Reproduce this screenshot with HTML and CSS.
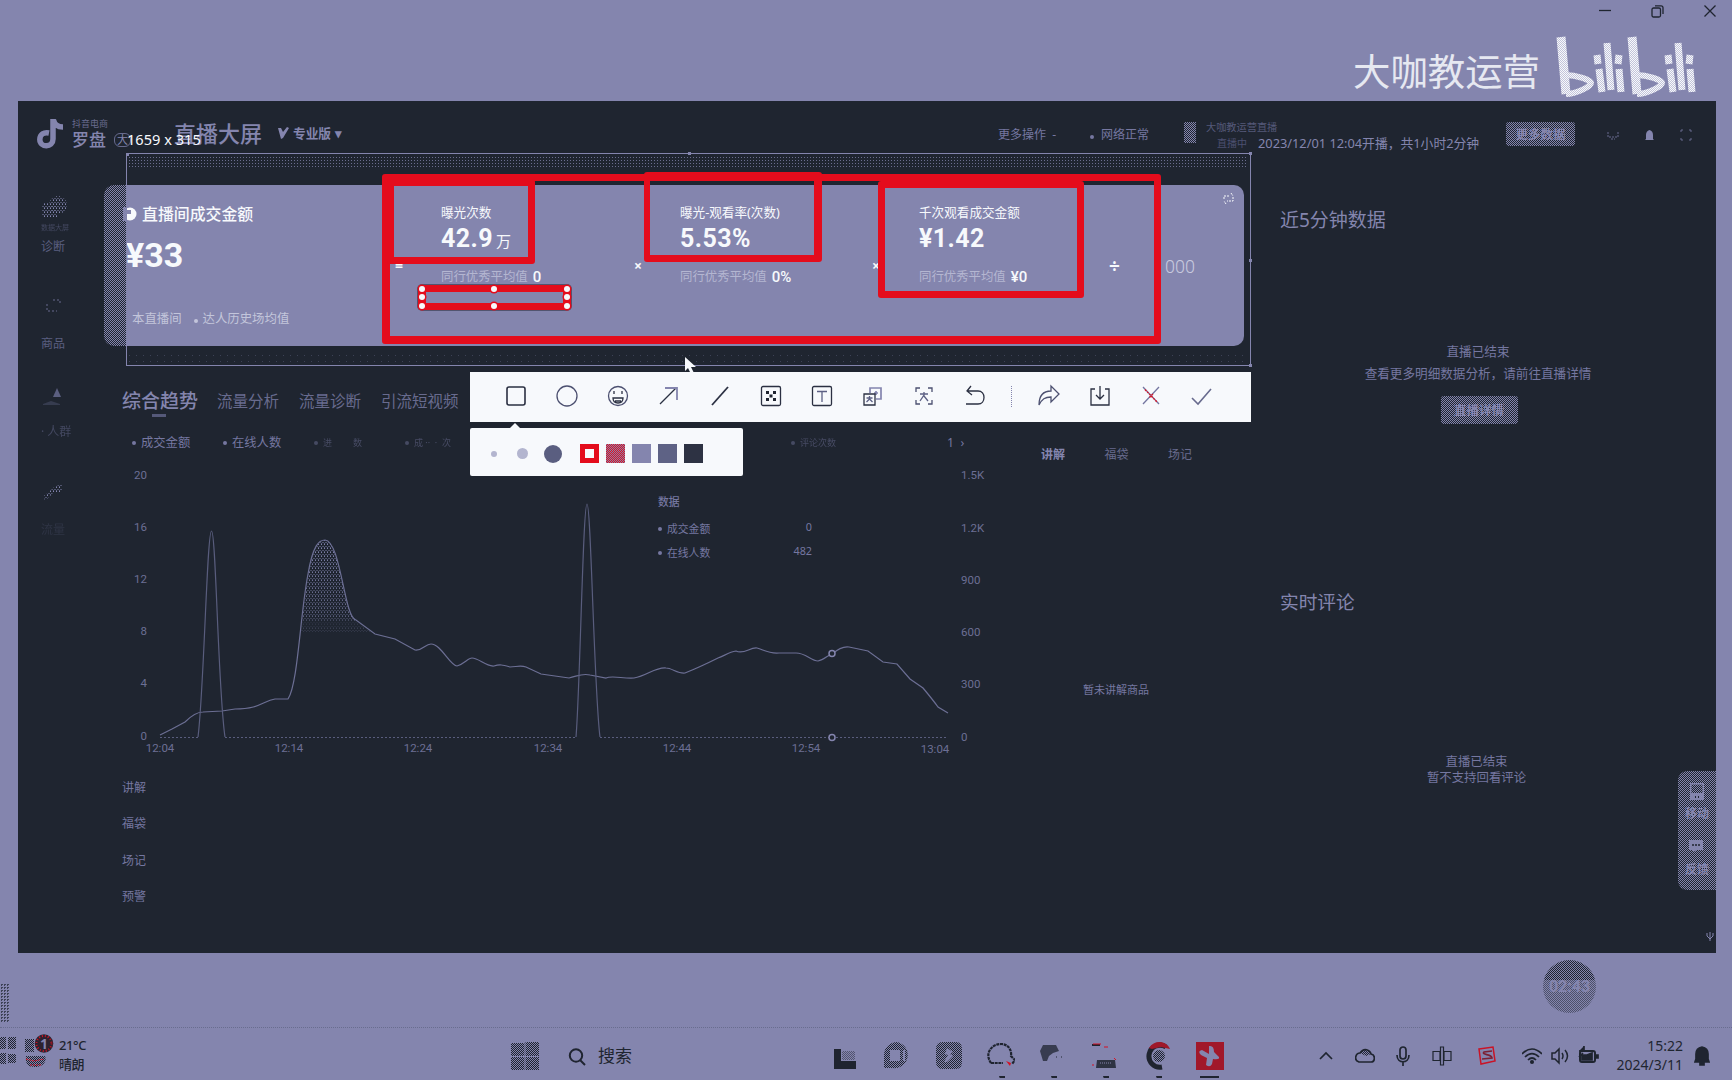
FILE: index.html
```html
<!DOCTYPE html>
<html lang="zh-CN">
<head>
<meta charset="utf-8">
<title>直播大屏</title>
<link rel="stylesheet" href="styles.css">
</head>
<body>
<div class="desktop">
  <header class="titlebar">
    <div class="window-controls">
      <svg width="12" height="12" viewBox="0 0 12 12"><path d="M0 5.5h12"/></svg>
      <svg width="13" height="13" viewBox="0 0 13 13"><rect x="1" y="3" width="8.500" height="9" rx="1.500"/><path d="M4 .8h6q2 0 2 2V9"/></svg>
      <svg width="12" height="12" viewBox="0 0 12 12"><path d="M.5.5l11 11M11.500.5l-11 11"/></svg>
    </div>
    <div class="watermark">
      <span>大咖教运营</span>
      <svg width="140" height="62" viewBox="0 0 140 62" fill="none" stroke="url(#grain)" stroke-width="7">
        <defs><pattern id="grain" width="2" height="2" patternUnits="userSpaceOnUse"><path d="M0 0h2v2H0z" fill="#c3c4da"/><path d="M0 0h1v1H0zM1 1h1v1H1z" fill="#f7f9fc"/></pattern></defs>
        <g id="bili"><path d="M5 2l5 57" stroke-width="9"/><path d="M9 40c12 0 26 5 26 8s-14 11-25 11" stroke-width="6"/><path d="M41 20l1 9M43 34l3 23M51 8l4 47M63 20l-1 9M63 34l2 23"/></g>
        <use href="#bili" x="71"/>
      </svg>
    </div>
  </header>

  <main class="dash">
    <div class="dash-header">
      <svg class="note" width="27" height="30" viewBox="0 0 27 30" fill="none" stroke="#8485ae" stroke-width="5.500"><path d="M16 0v20c0 9-13 9-13.200.5C3 15 7 13 12 14M16.500 1c1 5 4 7 9.500 7"/></svg>
      <div class="brand"><small>抖音电商</small><b>罗盘</b></div>
      <div class="ring">大</div>
      <h1>直播大屏</h1>
      <div class="edition"><svg width="11" height="12" viewBox="0 0 11 12"><path d="M0 1h3l2 4 4-5 2 1-6 10-2 1z"/></svg>专业版<i>▾</i></div>
      <span class="more-op">更多操作&nbsp;&nbsp;-</span>
      <span class="net"><i class="dot"></i>网络正常</span>
      <span class="avatar dither"></span>
      <div class="stream"><small>大咖教运营直播</small><p><em>直播中</em><span>2023/12/01 12:04开播，共1小时2分钟</span></p></div>
      <span class="btn dither more-data">更多数据</span>
      <div class="head-icons">
        <svg width="12" height="12" viewBox="0 0 12 12"><path d="M1 3v5h10V3M4 10h4" fill="none" stroke="#686b8e" stroke-dasharray="2 1"/></svg>
        <svg width="9" height="11" viewBox="0 0 9 11"><path d="M1 9V5Q1 1 4.500 0 8 1 8 5v4l1 1H0z" fill="#8485ae"/></svg>
        <svg width="12" height="12" viewBox="0 0 12 12"><path d="M1 3V1h2M9 1h2v2M1 9v2h2M9 11h2V9" fill="none" stroke="#686b8e"/></svg>
      </div>
    </div>

    <div class="dash-body">
      <nav class="side">
        <svg width="27" height="22" viewBox="0 0 27 22"><ellipse cx="17" cy="9" rx="9" ry="9" fill="url(#speckle)"/><path d="M1 7h15v14H1z" fill="url(#speckle)"/></svg>
        <span class="faint">数据大屏</span>
        <span>诊断</span>
        <svg class="s2" width="24" height="16" viewBox="0 0 24 16" fill="none" stroke="#686b8e" stroke-dasharray="2 2"><path d="M12 3l7 0v4M6 7v7h10"/></svg>
        <span class="s3">商品</span>
        <svg class="s4" width="24" height="20" viewBox="0 0 24 20"><path d="M16 0l4 9h-8z"/><path d="M2 16l8-3 9 3v1H2z" opacity=".4"/></svg>
        <span class="s5 faint">· 人群</span>
        <svg class="s6" width="24" height="20" viewBox="0 0 24 20"><path d="M21 0v9h-8L4 18 3 13l9-8z" fill="url(#speckle)"/></svg>
        <span class="s7 faint">流量</span>
      </nav>

      <section class="main">
        <div class="card">
          <div class="revenue">
            <h2><svg width="14" height="14" viewBox="0 0 14 14"><circle cx="7" cy="7" r="6.500" fill="#f7f9fc"/><path d="M0 0h4v14H0zM4 3h4v4H4z" fill="#8485ae"/></svg>直播间成交金额</h2>
            <strong>¥33</strong>
            <p><span>本直播间</span><span><i class="dot"></i>达人历史场均值</span></p>
          </div>
          <span class="op eq">=</span>
          <div class="metric"><label>曝光次数</label><strong>42.9<em>万</em></strong><p><span>同行优秀平均值</span><b>0</b></p></div>
          <span class="op">×</span>
          <div class="metric"><label>曝光-观看率(次数)</label><strong>5.53%</strong><p><span>同行优秀平均值</span><b>0%</b></p></div>
          <span class="op">×</span>
          <div class="metric"><label>千次观看成交金额</label><strong>¥1.42</strong><p><span>同行优秀平均值</span><b>¥0</b></p></div>
          <span class="op div">÷</span>
          <span class="thousand">000</span>
          <svg class="swap" width="11" height="11" viewBox="0 0 11 11"><path d="M1 6V3h6M10 4v4H4M8 0l2 3M3 11L1 8" stroke-dasharray="2 1"/></svg>
        </div>

        <div class="lower">
          <div class="trend">
            <div class="tabs"><b>综合趋势</b><span>流量分析</span><span>流量诊断</span><span>引流短视频</span></div>
            <div class="legend"><span><i class="dot"></i>成交金额</span><span><i class="dot"></i>在线人数</span><span class="dim"><i class="dot"></i>进 &nbsp; &nbsp; &nbsp; &nbsp; 数</span><span class="dim"><i class="dot"></i>成 ·· &nbsp;· &nbsp;次</span><span class="dim last"><i class="dot"></i>评论次数</span><span class="page">1 &nbsp;›</span></div>
            <div class="chart">
              <svg width="918" height="309" viewBox="104 456 918 309">
                <defs>
                  <pattern id="speckle" width="3" height="4" patternUnits="userSpaceOnUse"><path d="M0 0h1v1H0zM1.500 2h1v1h-1z" fill="#8485ae"/><path d="M0 3h1v1H0z" fill="#5b5f80"/></pattern>
                  <linearGradient id="fade" x1="0" y1="0" x2="0" y2="1"><stop offset="0" stop-color="#fff"/><stop offset=".85" stop-color="#999"/><stop offset=".9" stop-color="#222"/><stop offset="1" stop-color="#555"/></linearGradient>
                  <mask id="peak-mask"><path fill="url(#fade)" d="M301 632C305 600 309 540 325 540C340 540 345 618 356 620Q365 630 372 632Z"/></mask>
                </defs>
                <path fill="url(#speckle)" mask="url(#peak-mask)" d="M300 538H374V633H300Z"/>
                <path class="line" d="M160 735L172 729L185 722Q195 712 203 712L222 711L235 709C260 709 263 701 275 699L288 699C298 684 300 615 308 574C313 545 319 540 325 540C341 541 344 618 356 620L375 634L395 639L415 650C423 651 425 644 431 644C441 644 450 666 457 666C464 664 468 658 472 658C479 658 486 667 494 666C500 664 503 665 510 667C516 667 520 665 526 667L541 674L569 678C578 676 582 673 590 675L606 678C612 675 624 679 634 678C647 676 655 667 666 668C672 668 678 674 685 673C695 669 704 665 718 658C724 656 729 652 736 651C744 655 750 647 757 648C764 650 769 654 779 653L796 653C806 653 811 661 818 661C824 660 828 655 832 654C838 649 843 646 849 647L868 651L883 662L897 664L910 679L923 688Q933 700 938 707L948 713"/>
                <path class="line soft" d="M198 737C204 690 207 531 211.500 531C216 531 218 690 225 737M576 737C580 690 583 504 587 504C591 504 594 690 600 737"/>
                <path class="line soft" stroke-dasharray="2 2" d="M160 737.500H198M225 737.500H576M600 737.500H948"/>
                <g class="marker"><circle cx="832" cy="653.500" r="3"/><circle cx="832" cy="737.500" r="3"/></g>
                <g class="axis" text-anchor="end"><text x="147" y="479">20</text><text x="147" y="531">16</text><text x="147" y="583">12</text><text x="147" y="635">8</text><text x="147" y="687">4</text><text x="147" y="740">0</text></g>
                <g class="axis"><text x="961" y="479">1.5K</text><text x="961" y="532">1.2K</text><text x="961" y="584">900</text><text x="961" y="636">600</text><text x="961" y="688">300</text><text x="961" y="741">0</text></g>
                <g class="axis" text-anchor="middle"><text x="160" y="752">12:04</text><text x="289" y="752">12:14</text><text x="418" y="752">12:24</text><text x="548" y="752">12:34</text><text x="677" y="752">12:44</text><text x="806" y="752">12:54</text><text x="935" y="753">13:04</text></g>
              </svg>
              <div class="chart-tip"><b>数据</b><p><i class="dot"></i>成交金额<span>0</span></p><p><i class="dot"></i>在线人数<span>482</span></p></div>
            </div>
            <div class="events"><span>讲解</span><span>福袋</span><span>场记</span><span>预警</span></div>
          </div>
          <div class="talk">
            <div class="talk-tabs"><b>讲解</b><span>福袋</span><span>场记</span></div>
            <p>暂未讲解商品</p>
          </div>
        </div>
      </section>

      <aside class="right">
        <h3>近5分钟数据</h3>
        <div class="ended"><p>直播已结束</p><p>查看更多明细数据分析，请前往直播详情</p><span class="btn dither">直播详情</span></div>
        <h3 class="comments">实时评论</h3>
        <div class="no-comments"><p>直播已结束</p><p>暂不支持回看评论</p></div>
      </aside>
    </div>

    <div class="float-menu dither">
      <svg width="14" height="17" viewBox="0 0 14 17"><path d="M.7.7h12.600v15.600H.7z" fill="none" stroke="#8485ae" stroke-width="1.400"/><path d="M0 10h14v7H0z"/><path d="M5.500 13v2M8.500 13v2" stroke="#1f2430"/></svg>
      <span>移动</span>
      <svg width="16" height="14" viewBox="0 0 16 14"><path d="M0 0h14v10H8l-4 2v-2H0z"/><path d="M3 5h8" stroke="#1f2430" stroke-width="1.500" stroke-dasharray="2 1"/></svg>
      <span>反馈</span>
    </div>
    <svg class="corner" width="8" height="9" viewBox="0 0 8 9"><path d="M1 1v3l3 3 3-3V1M4 0v9" fill="none" stroke="#8485ae"/></svg>
  </main>

  <div class="shelf">
    <span class="fragment dither-dark"></span>
    <span class="ball">02:43</span>
  </div>

  <footer class="taskbar">
    <div class="weather">
      <svg width="56" height="38" viewBox="0 0 56 38"><path d="M0 3h6v12H0zM8 3h8v12H8zM0 19h6v11H0zM8 20h8v9H8z" fill="url(#dots)"/><path d="M25 5h9v13h-9zM26 22h18c3 0 3 11-9 11-7 0-10-3-9-11z" fill="url(#dots)"/><path d="M26 25l8 2 10-2M30 31h11" stroke="#d51124" fill="none" stroke-dasharray="2 1"/><circle cx="44" cy="9.500" r="9.300" fill="#2c222f"/><circle cx="44" cy="9.500" r="7.500" fill="none" stroke="#d51124" stroke-width="2" stroke-dasharray="1 2"/><text x="44" y="15" text-anchor="middle" font-size="14" font-weight="700" fill="#8485ae">1</text></svg>
      <p>21°C<br>晴朗</p>
    </div>
    <svg class="start" width="28" height="28" viewBox="0 0 28 28"><defs><pattern id="dots" width="2" height="2" patternUnits="userSpaceOnUse"><path d="M0 0h1v1H0zM1 1h1v1H1z" fill="#1f2430"/></pattern></defs><path d="M0 1h13.500v13H0zM14.500 0H28v14H14.500zM0 15h13.500v13H0zM14.500 15H28v13H14.500z" fill="url(#dots)"/></svg>
    <div class="search"><svg width="18" height="18" viewBox="0 0 18 18" fill="none" stroke="#1f2430" stroke-width="2"><circle cx="8" cy="7.500" r="6.200"/><path d="M12 12l5 5"/></svg>搜索</div>
    <div class="apps">
      <svg width="28" height="37" viewBox="0 0 28 37"><path d="M3 8h7v12h15v8H3z" fill="#1f2430"/><path d="M11 10h13v9H11z" fill="url(#dots)" opacity=".5"/></svg>
      <svg width="28" height="37" viewBox="0 0 28 37"><path d="M14 1a13 13 0 1 1-5 26H1V14A13 13 0 0 1 14 1zM7 9v11h10V9zM20 9v11h2V9z" fill="url(#dots)" fill-rule="evenodd"/></svg>
      <svg width="28" height="37" viewBox="0 0 28 37"><path fill-rule="evenodd" d="M7 1h14q6 0 6 7v13q0 7-6 7H7q-6 0-6-7V8q0-7 6-7zm5 6l-2 6 3 1-4 7h3l6-6-3-2 3-2z" fill="url(#dots)"/></svg>
      <svg width="28" height="37" viewBox="0 0 28 37" fill="none"><path d="M4 22C-3 12 5 3 14 3c7 0 11 6 10 12l4 4-3 4M4 22h12" stroke="#1f2430" stroke-width="2.200" stroke-dasharray="3 .7"/><path d="M19 20l4 5 1-3z" fill="#d51124"/><path d="M12 35h6v3h-5z" fill="#1f2430"/></svg>
      <svg width="28" height="37" viewBox="0 0 28 37"><path d="M1 10l3-6h13l3 6-6 2-4 3-2 5H4z" fill="#1f2430" opacity=".75"/><path d="M17 16h7" stroke="#1f2430" stroke-dasharray="1 4"/><path d="M12 35h6v3h-5z" fill="#1f2430"/></svg>
      <svg width="28" height="37" viewBox="0 0 28 37"><path d="M1 4h8" stroke="#1f2430" stroke-width="2"/><path d="M2 3h8M13 6h4M1 24h2M23 17l2 2" stroke="#d51124"/><path d="M6 19h18l1 8H5z" fill="#1f2430" opacity=".85"/><path d="M9 22h12" stroke="#8485ae" stroke-dasharray="1 1"/><path d="M12 35h6v3h-5z" fill="#1f2430"/></svg>
      <svg width="28" height="37" viewBox="0 0 28 37" fill="none"><path d="M22 6A11 11 0 1 0 18 26" stroke="#1f2430" stroke-width="5"/><path d="M5 7C10-1 22-1 26 8l-9-2-9 2z" fill="#9f182a"/><circle cx="15" cy="15" r="6" fill="url(#dots)"/><path d="M12 35h6v3h-5z" fill="#1f2430"/></svg>
      <svg width="28" height="37" viewBox="0 0 28 37"><path d="M0 1h28v28H0z" fill="#a1182a"/><path d="M13 5q5-1 5 6l5 5q1 3-6 2l-1 5q-2 4-6 1l1-7-6-3q-4-4 1-5l7 4z" fill="#8485ae"/><path d="M4 35h19v2H4z" fill="#1f2430"/></svg>
    </div>
    <div class="tray">
      <svg class="t1" width="14" height="20" viewBox="0 0 14 20"><path d="M1 13l6-6 6 6"/></svg>
      <svg class="t2" width="20" height="20" viewBox="0 0 20 20"><path d="M4 16C-2 14 1 7 5 7c4-6 10-3 11 1 5 1 4 8 0 8z"/><path d="M5 7c4-5 9-4 11 1l-5 2z" fill="url(#dots)" stroke="none"/></svg>
      <svg class="t3" width="14" height="20" viewBox="0 0 14 20"><rect x="4" y="1" width="6" height="12" rx="3"/><path d="M1 9c0 9 12 9 12 0M7 15v5"/></svg>
      <svg class="t4" width="20" height="20" viewBox="0 0 20 20" stroke-width="1.200"><path d="M1 5.500h7v9H1zM12 5.500h7v9h-7zM8.500 1h3v18h-3z"/></svg>
      <svg class="t5" width="20" height="20" viewBox="0 0 20 20"><path d="M2 3l14-2 2 14-14 3z" stroke="#ca1326" stroke-width="1.500"/><path d="M15 5l-8 1c-3 3 8 2 8 6l-10 1" stroke="#7b2034"/></svg>
      <svg class="t6" width="20" height="20" viewBox="0 0 20 20"><path d="M0 8q10-10 20 0M3 11q7-7 14 0M6 14q4-4 8 0"/><circle cx="10" cy="16" r="1.200" fill="#1f2430"/></svg>
      <svg class="t7" width="18" height="20" viewBox="0 0 18 20"><path d="M1 7h3l4-4v14l-4-4H1zM11 7q2 3 0 6M14 4q5 6 0 12" stroke-width="1.500"/></svg>
      <svg class="t8" width="21" height="20" viewBox="0 0 21 20"><rect x="2" y="5" width="15" height="11" rx="2" stroke-width="2"/><path d="M1 5h5V0M5 7l-4 4M18 9h2v3h-2zM4 14V9h5l5-2v7z" fill="#1f2430"/></svg>
      <p>15:22<br>2024/3/11</p>
      <svg class="t9" width="16" height="20" viewBox="0 0 16 20"><path d="M2 13V8Q2 2 8 1q6 1 6 7v5l1 3H1zM6 17h4v2H6z" fill="#1f2430"/></svg>
    </div>
  </footer>

  <div class="capture">
    <span class="capture-size">1659 x 315</span>
    <div class="selection"><i></i><i></i><i></i><i></i><i></i></div>
    <div class="box whole"></div><div class="box b1"></div><div class="box b2"></div><div class="box b3"></div>
    <div class="box active"><i></i><i></i><i></i><i></i><i></i><i></i><i></i><i></i></div>

    <div class="tools">
      <svg viewBox="0 0 24 24"><rect x="3" y="3" width="18" height="18" rx="2" stroke-width="1.600"/></svg>
      <svg viewBox="0 0 24 24"><circle cx="12" cy="12" r="10" stroke="#4c5070"/></svg>
      <svg viewBox="0 0 24 24"><circle cx="12" cy="12" r="9.500" stroke="#4c5070"/><path d="M8 7v3M16 7v3M7 14h10q0 5-5 5t-5-5zM9 17h6"/></svg>
      <svg viewBox="0 0 24 24"><path d="M3 20L19 4"/><path d="M8 4h12v12" stroke="#8485ae" stroke-width="1.800"/></svg>
      <svg viewBox="0 0 24 24"><path d="M4 21L20 3" stroke-width="1.800"/></svg>
      <svg viewBox="0 0 24 24"><rect x="2.500" y="2.500" width="19" height="19" rx="1.500"/><path d="M7 7h3v3H7zM14 7h3v3h-3zM10.500 10.500h3v3h-3zM7 14h3v3H7zM14 14h3v3h-3z" fill="#1f2430" stroke="none"/></svg>
      <svg viewBox="0 0 24 24"><rect x="2.500" y="2.500" width="19" height="19" rx="1.500"/><path d="M7 7.500h10M12 7.500V18" stroke="#5c6084"/></svg>
      <svg viewBox="0 0 24 24"><path d="M9 9V4h11v11h-5M15 7v4M13 9h4" stroke="#8485ae" stroke-width="1.700"/><path d="M3 10h11v11H3z"/><path d="M5.500 14h6M8.500 12v3l-3 3M8.500 15l3 3" stroke="#5c6084"/></svg>
      <svg viewBox="0 0 24 24"><path d="M4 8V4h4M16 4h4v4M4 16v4h4M16 20h4v-4" stroke="#4c5070"/><path d="M8 10h8M12 8v3l-4 6M12 12l4 5" stroke="#5c6084"/></svg>
      <svg viewBox="0 0 24 24"><path d="M3 20h12c8 0 8-13 0-13H4M8 2L4 7l5 4"/></svg>
      <b class="sep"></b>
      <svg viewBox="0 0 24 24"><path d="M2 21C2 11 7 7 14 7V2l8 8-8 8v-5C8 13 5 15 2 21z" stroke="#4c5070"/></svg>
      <svg viewBox="0 0 24 24"><path d="M7 5H3v16h18V5h-4M12 2v13M8 11l4 4 4-4"/></svg>
      <svg viewBox="0 0 24 24"><path d="M4 3l16 17M20 3L4 20" stroke="#7476a0"/><path d="M6 5.500l12 12.500M14 10l-4 4" stroke="#dc1729" stroke-dasharray="2 1"/></svg>
      <svg viewBox="0 0 24 24"><path d="M2 14l6 6L21 5" stroke="#686b8e" stroke-width="1.600"/></svg>
    </div>
    <div class="palette">
      <i class="size s"></i><i class="size m"></i><i class="size l"></i>
      <i class="swatch red"></i><i class="swatch pink"></i><i class="swatch blue"></i><i class="swatch gray"></i><i class="swatch black"></i>
    </div>
    <svg class="cursor" width="12" height="18" viewBox="0 0 12 18"><path d="M0 0v14l3-3 3 6 3-1-3-6h5z" fill="#f7f9fc"/></svg>
  </div>
</div>
</body>
</html>
```

FILE: styles.css
```css
:root {
  --mist: #8485ae;
  --ink: #1f2530;
  --dim: #686b8e;
  --white: #f7f9fc;
  --red: #e40c1c;
}
* { box-sizing: border-box; }
body { margin: 0; background: var(--mist); font-family: "Noto Sans", "Noto Sans CJK SC", sans-serif; color: var(--mist); }
h1, h2, h3, p { margin: 0; font-weight: 400; }
i, em { font-style: normal; }
svg { display: block; flex: none; }
.desktop { position: relative; width: 1732px; height: 1080px; overflow: hidden; display: flex; flex-direction: column; white-space: nowrap; }
.dither { background: repeating-conic-gradient(var(--mist) 0 25%, var(--ink) 0 50%) 0 0 / 2px 2px; }
.dither-dark { background: repeating-conic-gradient(var(--ink) 0 25%, var(--mist) 0 100%) 0 0 / 3px 3px; }
.dot { display: inline-block; width: 4px; height: 4px; border-radius: 50%; background: currentColor; margin-right: 5px; flex: none; }

/* window title strip */
.titlebar { height: 101px; display: flex; flex-direction: column; align-items: flex-end; }
.window-controls { display: flex; gap: 40px; padding: 5px 16px 0 0; height: 35px; }
.window-controls svg { fill: none; stroke: var(--ink); stroke-width: 1.3; }
.watermark { display: flex; align-items: center; gap: 16px; height: 62px; padding-right: 36px; color: #e6e8f1; font-size: 37.4px; }
.watermark span { line-height: 62px; padding-top: 12px; }

/* dashboard */
.dash { position: relative; height: 852px; margin: 0 16px 0 18px; background: var(--ink); }
.dash-header { height: 52px; display: grid; grid-template-columns: 35px 42px 60px 104px 720px 92px 94px 22px 300px 101px 96px; padding-left: 19px; align-items: start; }
.dash-header > * { margin-top: 18px; }
.brand { display: flex; flex-direction: column; }
.brand small { font-size: 9px; line-height: 10px; color: var(--dim); }
.brand b { font-size: 17px; line-height: 22px; font-weight: 500; }
.ring { width: 17px; height: 14px; border: 1px solid var(--dim); border-radius: 6px; font-size: 11px; line-height: 12px; text-align: center; }
.dash-header .ring { margin-top: 32px; }
h1 { font-size: 22px; line-height: 29px; font-weight: 500; }
.dash-header .edition { margin-top: 22px; }
.edition { display: flex; align-items: center; gap: 4px; font-size: 12.7px; line-height: 20px; font-weight: 700; }
.edition svg { fill: var(--mist); }
.more-op, .net { font-size: 12px; line-height: 32px; color: #7577a0; }
.net .dot { margin-right: 7px; }
.avatar { width: 12px; height: 21px; }
.dash-header .avatar { margin-top: 21px; }
.stream { font-size: 12px; line-height: 18px; }
.stream small { display: block; font-size: 10.2px; line-height: 16px; color: #555979; }
.stream p { padding-left: 11px; font-size: 12.8px; line-height: 17px; display: flex; }
.stream p em { width: 41px; font-size: 10px; color: #4c5070; }
.btn { display: block; width: 69px; height: 24px; border-radius: 3px; text-align: center; font-size: 12.5px; font-weight: 700; line-height: 25px; color: #8485ae; }
.dash-header .btn { margin-top: 21px; }
.head-icons { display: flex; gap: 26px; align-items: center; height: 32px; }

.dash-body { display: grid; grid-template-columns: 86px 1146px 1fr; }
.side { display: flex; flex-direction: column; align-items: flex-start; padding: 43px 0 0 23px; font-size: 12px; line-height: 18px; color: #5b5f80; }
.side svg { fill: #5b5f80; }
.side .faint { opacity: .6; }
.side > span:nth-of-type(1) { font-size: 7px; line-height: 20px; }
.side .s2 { margin-top: 41px; fill: none; }
.side .s3 { margin-top: 22px; }
.side .s4 { margin-top: 35px; }
.side .s5 { margin-top: 15px; }
.side .s6 { margin-top: 42px; }
.side .s7 { margin-top: 18px; opacity: .25; }

.card { position: relative; margin: 32px 6px 26px 0; height: 161px; border-radius: 10px; background: linear-gradient(to right, transparent 23px, var(--mist) 23px), repeating-conic-gradient(var(--mist) 0 25%, var(--ink) 0 50%) 0 0 / 2px 2px; color: var(--white); display: grid; grid-template-columns: 291px 46px 193px 46px 192px 47px 190px 56px 80px; align-items: start; }
.revenue { padding: 17px 0 0 19px; }
.revenue h2 { display: flex; align-items: center; gap: 5px; font-size: 15.9px; line-height: 24px; font-weight: 500; }
.revenue strong { display: block; padding-left: 3px; margin-top: 8px; font: 700 34px/42px Roboto, sans-serif; }
.revenue p { display: flex; gap: 12px; margin-top: 34px; padding-left: 9px; font-size: 12.4px; line-height: 18px; color: #c3c5db; }
.metric label { display: block; margin-top: 19px; font-size: 12.6px; line-height: 18px; }
.metric strong { display: block; font: 700 25px/34px Roboto, sans-serif; letter-spacing: .4px; }
.metric em { font: 400 15px "Noto Sans CJK SC"; margin-left: 3px; }
.metric p { display: flex; gap: 5px; margin-top: 12px; font-size: 12.4px; line-height: 18px; color: #b4b6d1; }
.metric p b { font: 500 15px/18px Roboto, sans-serif; color: var(--white); }
.op { margin-top: 70px; font-size: 14px; line-height: 22px; font-weight: 700; }
.op.div { font-size: 19px; }
.thousand { margin-top: 70px; font: 300 18px/24px Roboto, sans-serif; color: #c8cadf; }
.swap { position: absolute; right: 10px; top: 8px; fill: none; stroke: var(--white); stroke-width: 1; }

.lower { display: grid; grid-template-columns: 918px 228px; }
.tabs { display: flex; height: 58px; padding-left: 18px; line-height: 58px; font-size: 15.5px; color: var(--dim); }
.tabs b { position: relative; width: 95px; font-size: 19px; font-weight: 500; color: var(--mist); }
.tabs b::after { content: ""; position: absolute; left: 30px; top: 42px; width: 14px; height: 3px; background: #555979; }
.tabs span { width: 82px; }
.legend { display: flex; height: 26px; padding-left: 28px; line-height: 26px; font-size: 12.3px; }
.legend span { width: 91px; display: flex; align-items: center; white-space: pre; color: #7577a0; }
.legend .dim { opacity: .45; font-size: 9px; }
.legend .last { margin-left: 295px; width: 156px; }
.legend .page { width: 40px; }
.chart { position: relative; height: 309px; }
.line { fill: none; stroke: #6c6f94; stroke-width: 1.2; }
.soft { stroke: #595d7d; }
.marker { fill: var(--ink); stroke: var(--mist); stroke-width: 1.5; }
.axis { fill: #6c6f94; font-family: Roboto, sans-serif; font-size: 11.5px; }
.chart-tip { position: absolute; left: 554px; top: 36px; width: 154px; font-size: 10.8px; color: #7577a0; }
.chart-tip b { display: block; font-weight: 500; line-height: 19px; }
.chart-tip p { display: flex; align-items: center; line-height: 24px; }
.chart-tip p:first-of-type { margin-top: 6px; }
.chart-tip p span { margin-left: auto; padding-bottom: 5px; line-height: 19px; }
.events { display: flex; flex-direction: column; padding: 5px 0 0 18px; font-size: 12px; line-height: 36.4px; color: #7577a0; }
.talk-tabs { display: flex; padding: 71px 0 0 19px; font-size: 12px; line-height: 24px; color: var(--dim); }
.talk-tabs b { color: var(--mist); }
.talk-tabs > * { width: 63.5px; }
.talk p { margin: 213px 0 0 61px; font-size: 11px; line-height: 20px; color: #7577a0; }

.right h3 { padding: 52px 0 0 30px; font-size: 19px; line-height: 30px; }
.ended { margin: 106px 0 0 104px; width: 250px; font-size: 12.6px; line-height: 22px; text-align: center; color: #7577a0; }
.ended p { margin-left: -13px; margin-right: -11px; }
.ended .btn { width: 77px; height: 28px; line-height: 30px; margin: 11px auto 0; }
.right .comments { padding-top: 163px; font-size: 18.7px; }
.no-comments { margin-top: 137px; width: 453px; text-align: center; font-size: 12.4px; line-height: 16px; color: #7577a0; }
.float-menu { position: absolute; right: 0; top: 670px; width: 38px; height: 119px; border-radius: 9px 0 0 9px; display: flex; flex-direction: column; align-items: center; padding-top: 12px; font-size: 12px; font-weight: 700; line-height: 18px; color: #8485ae; }
.float-menu svg { fill: #8485ae; }
.float-menu span { margin: 5px 0 17px; }
.float-menu span:last-child { margin-top: 7px; }
.corner { position: absolute; right: 2px; top: 831px; }

/* strip between window and taskbar */
.shelf { height: 74px; display: flex; justify-content: space-between; align-items: flex-start; padding-right: 136px; }
.fragment { width: 9px; height: 39px; margin-top: 31px; opacity: .7; }
.ball { width: 53px; height: 53px; margin-top: 7px; border-radius: 50%; background: linear-gradient(transparent 38%, rgba(132, 133, 174, .45) 38%), repeating-conic-gradient(var(--ink) 0 25%, var(--mist) 0 50%) 0 0 / 2px 2px; color: #8485ae; text-align: center; font: 700 16px/53px Roboto, sans-serif; }

/* taskbar */
.taskbar { height: 53px; display: flex; align-items: flex-start; border-top: 1px dotted #696d8f; color: var(--ink); }
.weather { display: flex; gap: 3px; padding-top: 6px; width: 511px; line-height: 19px; }
.weather p { padding-top: 2px; font-size: 13px; font-weight: 500; letter-spacing: -.4px; }
.start { margin-top: 14px; }
.search { display: flex; align-items: center; gap: 12px; margin: 15px 0 0 29px; width: 263px; line-height: 26px; font-size: 17px; }
.search svg { margin-top: 1px; }
.apps { display: flex; gap: 24.1px; margin-top: 13px; }
.tray { flex: 1; display: flex; padding: 18px 22px 0 0; justify-content: flex-end; }
.tray svg { fill: none; stroke: var(--ink); stroke-width: 1.7; }
.tray .t2 { margin-left: 22px; }
.tray .t3 { margin-left: 21px; }
.tray .t4 { margin-left: 22px; stroke-width: 1.2; }
.tray .t5 { margin-left: 25px; }
.tray .t6 { margin-left: 25px; }
.tray .t7 { margin-left: 9px; }
.tray .t8 { margin-left: 9px; }
.tray p { margin: -10px 9px 0 12px; width: 74px; padding-right: 2px; text-align: right; font-size: 14px; line-height: 19px; }

/* screen-capture overlay */
.capture { position: absolute; inset: 0; }
.capture > * { position: absolute; }
.capture-size { left: 127px; top: 127px; font-size: 14.6px; line-height: 25px; color: var(--white); }
.selection { left: 126px; top: 153px; width: 1125px; height: 213px; border: 1px solid var(--mist); }
.selection::before, .selection::after { content: ""; position: absolute; left: 2px; right: 3px; height: 11px; top: 3px; opacity: .75; background: radial-gradient(circle at .5px .5px, var(--mist) .7px, transparent .8px) 0 0 / 3px 3px; }
.selection::after { top: auto; bottom: 1px; height: 9px; opacity: .3; background-size: 7px 6px; }
.selection i { position: absolute; width: 3px; height: 3px; background: var(--mist); left: -1px; top: -1px; }
.selection i:nth-child(2) { left: 561px; top: -2px; }
.selection i:nth-child(3) { left: 1122px; top: -2px; }
.selection i:nth-child(4) { left: 1122px; top: 105px; }
.selection i:nth-child(5) { left: 1122px; top: 210px; }
.box { border: 7px solid var(--red); border-radius: 3px; }
.whole { left: 382px; top: 174px; width: 779px; height: 170px; border-width: 7px 7px 8px 8px; }
.b1 { left: 387px; top: 179px; width: 148px; height: 85px; }
.b2 { left: 644px; top: 172px; width: 178px; height: 90px; border-width: 8px 8px 7px 6px; }
.b3 { left: 878px; top: 181px; width: 206px; height: 117px; }
.active { left: 418px; top: 285px; width: 153px; height: 25px; border-width: 7px 8px; border-radius: 4px; box-shadow: 0 0 0 1px rgba(31, 36, 48, .5); }
.active i { position: absolute; width: 6px; height: 6px; border-radius: 50%; background: var(--white); left: -7px; top: -6px; box-shadow: 0 0 0 1.5px var(--red); }
.active i:nth-child(2) { left: 65px; }
.active i:nth-child(3) { left: 138px; }
.active i:nth-child(4) { top: 2px; }
.active i:nth-child(5) { left: 138px; top: 2px; }
.active i:nth-child(6) { top: 11px; }
.active i:nth-child(7) { left: 65px; top: 11px; }
.active i:nth-child(8) { left: 138px; top: 11px; }
.tools { left: 470px; top: 372px; width: 781px; height: 50px; background: var(--white); display: flex; align-items: center; gap: 27.1px; padding: 0 0 2px 33.5px; }
.tools svg { width: 24px; height: 24px; fill: none; stroke: #2b3042; stroke-width: 1.3; }
.sep { width: 1px; height: 21px; border-left: 1px dotted var(--mist); margin: 0 -3px; }
.palette { left: 470px; top: 428px; width: 273px; height: 48px; background: var(--white); border-radius: 2px; display: flex; align-items: center; padding: 3px 0 0 21px; }
.palette::before { content: ""; position: absolute; left: 40px; top: -5px; border: 5px solid transparent; border-top: 0; border-bottom-color: var(--white); }
.size { border-radius: 50%; background: #b3b5cf; width: 6px; height: 6px; }
.size.m { width: 11px; height: 11px; margin-left: 20px; }
.size.l { width: 18px; height: 18px; margin-left: 16px; background: #5a5e80; }
.swatch { width: 19px; height: 19px; margin-left: 7px; }
.swatch.red { margin-left: 18px; border: 5px solid var(--red); }
.swatch.pink { background: repeating-conic-gradient(var(--red) 0 25%, #8485ae 0 50%) 0 0 / 2px 2px; }
.swatch.blue { background: var(--mist); }
.swatch.gray { background: #5e6285; }
.swatch.black { background: #2d3243; }
.cursor { left: 685px; top: 357px; }
```
